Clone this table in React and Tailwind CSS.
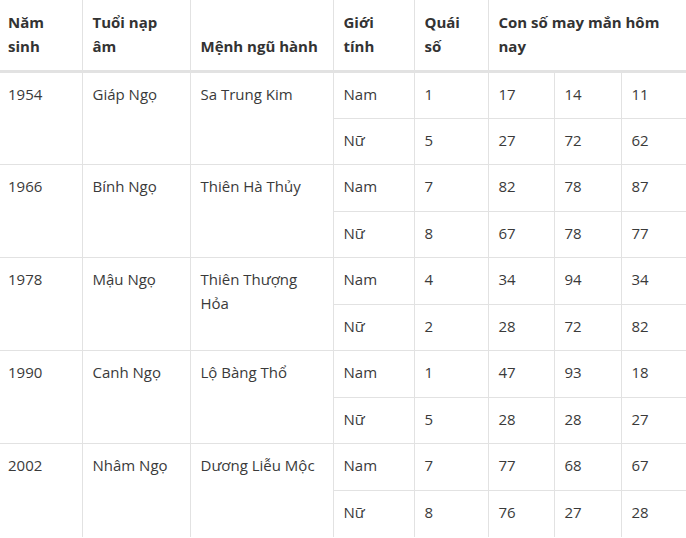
import React from "react";

const data = [
  {
    year: "1954",
    tuoi: "Giáp Ngọ",
    menh: ["Sa Trung Kim"],
    rows: [
      ["Nam", "1", "17", "14", "11"],
      ["Nữ", "5", "27", "72", "62"],
    ],
  },
  {
    year: "1966",
    tuoi: "Bính Ngọ",
    menh: ["Thiên Hà Thủy"],
    rows: [
      ["Nam", "7", "82", "78", "87"],
      ["Nữ", "8", "67", "78", "77"],
    ],
  },
  {
    year: "1978",
    tuoi: "Mậu Ngọ",
    menh: ["Thiên Thượng", "Hỏa"],
    rows: [
      ["Nam", "4", "34", "94", "34"],
      ["Nữ", "2", "28", "72", "82"],
    ],
  },
  {
    year: "1990",
    tuoi: "Canh Ngọ",
    menh: ["Lộ Bàng Thổ"],
    rows: [
      ["Nam", "1", "47", "93", "18"],
      ["Nữ", "5", "28", "28", "27"],
    ],
  },
  {
    year: "2002",
    tuoi: "Nhâm Ngọ",
    menh: ["Dương Liễu Mộc"],
    rows: [
      ["Nam", "7", "77", "68", "67"],
      ["Nữ", "8", "76", "27", "28"],
    ],
  },
];

const th = "align-bottom text-left font-bold px-[10px] pt-[10px] pb-[12px] border-l border-[#e2e2e2] first:border-l-0 first:pl-2";
const td = "align-top text-left px-[10px] pt-[9px] border-l border-t border-[#e2e2e2]";

export default function App() {
  return (
    <div
      className="w-[686px] h-[538px] bg-white overflow-hidden text-[15px] leading-6 text-[#3a3a3a]"
      style={{ fontFamily: '"Open Sans", "Noto Sans", sans-serif' }}
    >
      <table className="w-[686px] table-fixed border-collapse">
        <colgroup>
          <col className="w-[82px]" />
          <col className="w-[108px]" />
          <col className="w-[143px]" />
          <col className="w-[81px]" />
          <col className="w-[74px]" />
          <col className="w-[66px]" />
          <col className="w-[67px]" />
          <col className="w-[65px]" />
        </colgroup>
        <thead>
          <tr className="border-b-[3px] border-[#e2e2e2] text-[#333]">
            <th className={th}>
              Năm
              <br />
              sinh
            </th>
            <th className={th}>
              Tuổi nạp
              <br />
              âm
            </th>
            <th className={th}>Mệnh ngũ hành</th>
            <th className={th}>
              Giới
              <br />
              tính
            </th>
            <th className={th}>
              Quái
              <br />
              số
            </th>
            <th className={th} colSpan={3}>
              Con số may mắn hôm
              <br />
              nay
            </th>
          </tr>
        </thead>
        <tbody>
          {data.map((g) =>
            g.rows.map((r, i) => (
              <tr key={g.year + i} className="h-[46.5px]">
                {i === 0 && (
                  <>
                    <td rowSpan={2} className={td + " border-l-0 pl-2"}>
                      {g.year}
                    </td>
                    <td rowSpan={2} className={td}>
                      {g.tuoi}
                    </td>
                    <td rowSpan={2} className={td}>
                      {g.menh.map((m, k) => (
                        <div key={k}>{m}</div>
                      ))}
                    </td>
                  </>
                )}
                {r.map((c, k) => (
                  <td key={k} className={td}>
                    {c}
                  </td>
                ))}
              </tr>
            ))
          )}
        </tbody>
      </table>
    </div>
  );
}
